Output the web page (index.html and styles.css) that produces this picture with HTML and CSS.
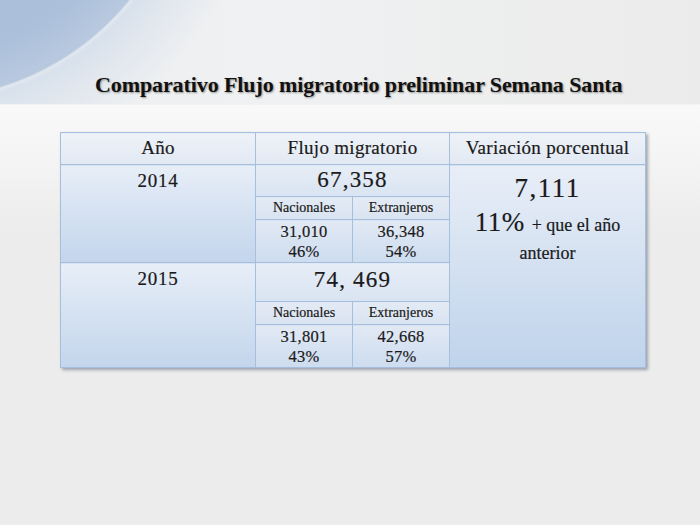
FILE: index.html
```html
<!DOCTYPE html>
<html lang="es">
<head>
<meta charset="utf-8">
<title>Comparativo Flujo migratorio preliminar Semana Santa</title>
<link rel="stylesheet" href="styles.css">
</head>
<body>
<div class="slide">
  <header class="title-band">
    <h1 class="title">Comparativo Flujo migratorio preliminar Semana Santa</h1>
  </header>
  <main class="content">
    <table class="flow">
      <colgroup>
        <col class="c-year">
        <col class="c-sub">
        <col class="c-sub">
        <col class="c-var">
      </colgroup>
      <tr class="r-head">
        <th>Año</th>
        <th colspan="2">Flujo migratorio</th>
        <th>Variación porcentual</th>
      </tr>
      <tr class="r-total">
        <td rowspan="3" class="year">2014</td>
        <td colspan="2" class="total">67,358</td>
        <td rowspan="6" class="variation">
          <div class="var-num">7,111</div>
          <div class="var-line"><span class="var-pct">11%</span><span class="var-small">+ que el año</span></div>
          <div class="var-line2">anterior</div>
        </td>
      </tr>
      <tr class="r-label">
        <td class="label">Nacionales</td>
        <td class="label">Extranjeros</td>
      </tr>
      <tr class="r-data">
        <td class="data">31,010<br>46%</td>
        <td class="data">36,348<br>54%</td>
      </tr>
      <tr class="r-total2">
        <td rowspan="3" class="year">2015</td>
        <td colspan="2" class="total">74, 469</td>
      </tr>
      <tr class="r-label2">
        <td class="label">Nacionales</td>
        <td class="label">Extranjeros</td>
      </tr>
      <tr class="r-data">
        <td class="data">31,801<br>43%</td>
        <td class="data">42,668<br>57%</td>
      </tr>
    </table>
  </main>
</div>
</body>
</html>
```

FILE: styles.css
```css
html, body {
  margin: 0;
  padding: 0;
}

body {
  width: 700px;
  height: 525px;
  overflow: hidden;
  background: #ececec;
  font-family: "Liberation Serif", "DejaVu Serif", serif;
  color: #1a1a1a;
}

.slide {
  width: 700px;
  height: 525px;
  background: linear-gradient(to bottom, #ececec 0, #ececec 104px, #f9f9f9 105px, #f5f5f5 150px, #ececec 230px, #ececec 100%);
  display: flex;
  flex-direction: column;
}

.title-band {
  height: 104px;
  box-sizing: border-box;
  display: flex;
  align-items: flex-end;
  padding: 0 0 5px 95px;
  background:
    radial-gradient(circle at -78px -168px, #a2b8d6 0, #acc0db 225px, #b8c9df 266px, #e1e8f0 268px, #d8e1ec 272px, rgba(224, 230, 238, 0.85) 300px, rgba(236, 238, 241, 0) 345px),
    linear-gradient(to right, #eceef0 0, #f0f1f2 40%, #ebebeb 100%);
}

.title {
  margin: 0;
  font-family: "Liberation Serif", serif;
  font-weight: bold;
  font-size: 22px;
  line-height: 28px;
  letter-spacing: -0.1px;
  color: #111;
  text-shadow: 1px 1px 2px rgba(0, 0, 0, 0.4);
}

.content {
  padding: 28px 0 0 60px;
}

.flow {
  border-collapse: collapse;
  width: 585px;
  table-layout: fixed;
  box-shadow: 2px 2px 3px rgba(60, 70, 90, 0.45);
  -webkit-text-stroke: 0.2px #1a1a1a;
}

.c-year { width: 195px; }
.c-sub { width: 97px; }
.c-var { width: 196px; }

.flow th,
.flow td {
  border: 1.5px solid #a6bfdd;
  padding: 0;
  text-align: center;
  vertical-align: top;
  font-weight: normal;
}

.flow th {
  height: 31px;
  font-size: 19px;
  line-height: 30px;
  letter-spacing: 0.3px;
  background: linear-gradient(to bottom, #eef2f8, #e2e9f3);
}

.r-total td.total,
.r-total2 td.total {
  font-size: 23px;
  line-height: 30px;
  letter-spacing: 1.2px;
  background: linear-gradient(to bottom, #e6edf6, #d9e4f2);
}

.r-total td.total { height: 31px; }
.r-total2 td.total { height: 36px; padding-top: 2px; }

.year {
  font-size: 19px;
  line-height: 24px;
  letter-spacing: 0.8px;
  padding-top: 4px !important;
  background: linear-gradient(to bottom, #e7eef7, #c3d5ec);
}

.label {
  height: 22px;
  font-size: 14px;
  line-height: 22px;
  background: linear-gradient(to bottom, #e3eaf4, #d9e4f1);
}

.data {
  height: 39px;
  font-size: 16.5px;
  line-height: 20px;
  padding-top: 2px !important;
  letter-spacing: 0.3px;
  background: linear-gradient(to bottom, #e2e9f4, #cddcef);
}

.variation {
  background: linear-gradient(to bottom, #e8eef7, #bfd3eb);
}

.var-num {
  font-size: 27px;
  line-height: 30px;
  letter-spacing: 1.5px;
  padding-top: 8px;
}

.var-line {
  margin-top: 4px;
  line-height: 30px;
  display: flex;
  justify-content: center;
  align-items: baseline;
  gap: 7px;
}

.var-pct {
  font-size: 27px;
  letter-spacing: 0.5px;
}

.var-small {
  font-size: 18px;
}

.var-line2 {
  font-size: 18px;
  line-height: 26px;
}
```
